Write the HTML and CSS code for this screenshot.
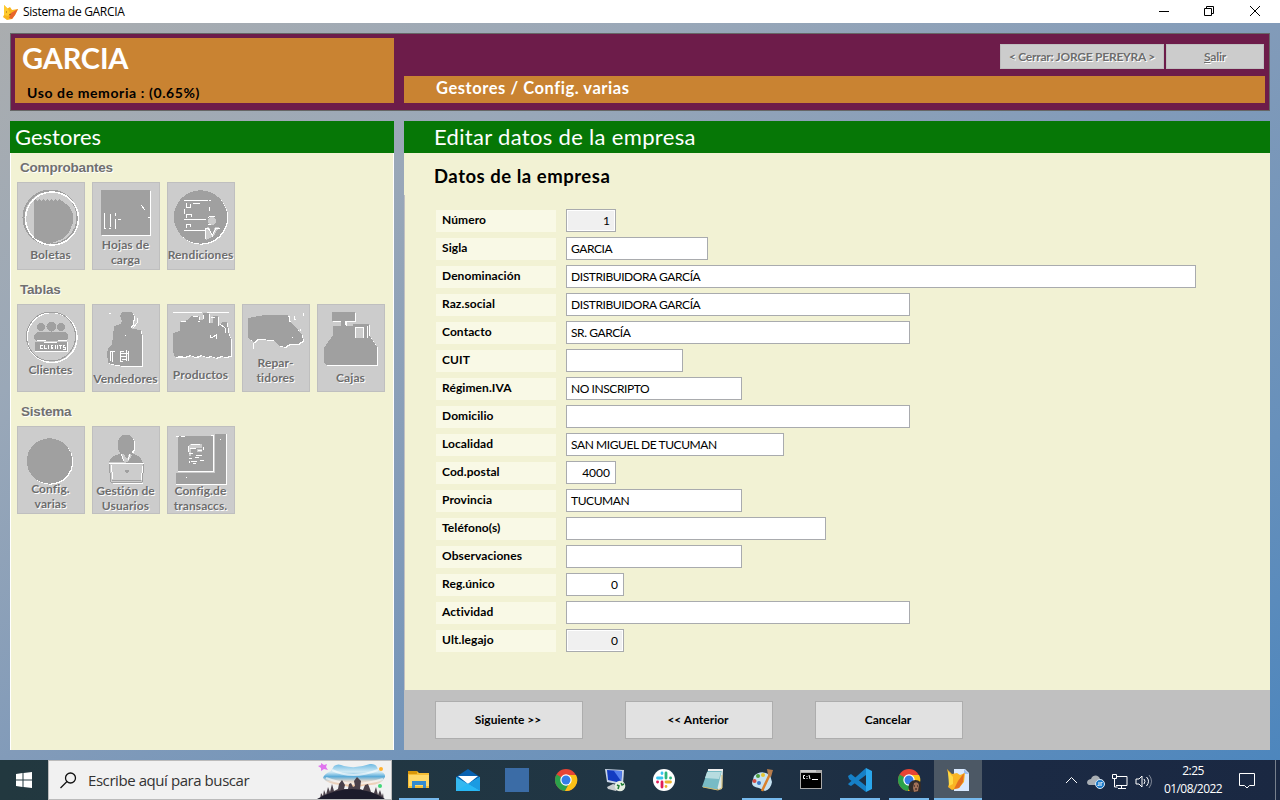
FILE: index.html
```html
<!DOCTYPE html>
<html lang="es">
<head>
<meta charset="utf-8">
<title>Sistema de GARCIA</title>
<link rel="stylesheet" href="styles.css">
</head>
<body>
<div class="screen">
<header class="titlebar">
  <svg class="fox" viewBox="0 0 18 18" width="18" height="18"><path d="M2 2l3.500 3.500L8 4l2 3 6-1-3 6-3 4-5 1-4-3 1.500-3z" fill="#f9b51b"/><path d="M9 10l7-4-3 6-3 4-3-1z" fill="#e8642a"/><path d="M2 2l4 4 2 4-2 3-4-1z" fill="#ffcb2e"/><path d="M4 9h1M7 12l2-1" stroke="#9a5a10"/></svg>
  <span class="win-title">Sistema de GARCIA</span>
  <svg class="win-controls" viewBox="0 0 120 22" width="120" height="22" fill="none" stroke="#000"><path d="M9 10.500h10M54.500 7.500h7v7h-7zM56.500 7.500v-2h7v7h-2"/><path d="M100 5l10 10M110 5l-10 10"/></svg>
</header>
<main class="desktop">
  <section class="banner">
    <div class="brand"><h1>GARCIA</h1><p>Uso de memoria : (0.65%)</p></div>
    <div class="banner-right">
      <div class="session"><button class="b1" disabled>&lt; Cerrar: JORGE PEREYRA &gt;</button><button class="b2" disabled><u>S</u>alir</button></div>
      <div class="crumb"><span>Gestores / Config. varias</span></div>
    </div>
  </section>
  <div class="columns">
    <aside class="side">
      <h2 class="bar">Gestores</h2>
      <div class="group">
        <h3 class="g1">Comprobantes</h3>
        <div class="tiles">
          <div class="tile"><svg class="h65"><circle class="ring" cx="33.500" cy="35.500" r="27"/><circle class="wring" cx="35" cy="36.500" r="26.500"/><path class="g" d="M17 19l1-2 2 2 2-2 2 2 2-2 2 2 2-2 2 2 2-2 2 2 2-2 2 2 2-2 3 2 7 5 4 8v9l-4 9-7 7-10 4h-7l-11-5z"/><path class="ring" d="M19 56l12 5"/></svg><span>Boletas</span></div>
          <div class="tile"><svg class="h55"><path class="w" d="M10 9h49v45H10z"/><path class="g" d="M9 8h49v45H9z"/><path class="wl" d="M12.500 31v15M18.500 32v13M23.500 31v3M23.500 37v10M26 37h2M28 37h1M12 46h2M17 46h2M49 23l4 5M56 36l3-1M58.500 31v6M10 53h7"/></svg><span>Hojas de<br>carga</span></div>
          <div class="tile"><svg class="h65"><circle class="w" cx="34.500" cy="36" r="26.700"/><circle class="g" cx="33.500" cy="35" r="26.700"/><path class="wl" d="M17 18.500h24M42 18.500h2M19.500 21v4h4v-3M26 21.500h7M17 27v5M42 25v4M19.500 36v-4h5v3M17 37.500h22M19.500 46v-4h4v3M17 48.500h21"/><circle cx="45" cy="39" r="4" fill="#ccc"/><path d="M38 46l4-1 3 8 3-8 4 0-5 9-8 4z" fill="#ccc"/><path class="wl" d="M38.500 57V46.500h3l4 7 3-7h4M41 36l2-2h5M41 42l3 1"/></svg><span>Rendiciones</span></div>
        </div>
      </div>
      <div class="group">
        <h3 class="g2">Tablas</h3>
        <div class="tiles">
          <div class="tile"><svg class="h58"><circle class="wring" cx="35" cy="33.500" r="25"/><circle class="ring2" cx="34" cy="32.500" r="24.500"/><g class="g"><circle cx="24" cy="23" r="4"/><circle cx="34.500" cy="22.500" r="5"/><circle cx="44" cy="23" r="4"/><path d="M20 28h28l3 3v4l-3 2H20l-3-2v-3zM18 38h32v9H18z"/></g><path class="wl" d="M20 36.500h9M27 38.500h13M41 36.500h9M18 47.500h33M50.500 38v9"/><path class="wl" d="M25.500 41.500h-2v3h2M27.500 41v3.500h2M31.500 41v4M36 41.500h-2v3h2M34 43h2M38.500 45v-4M40.500 45v-4M42 41.500h3M43.500 41v4M48 41.500h-2v1.500h2v2h-2"/></svg><span>Clientes</span></div>
          <div class="tile"><svg class="h67"><path class="w" transform="translate(1 1)" d="M30 8h10l2 4-1 8-3 3 2 2 9 1 1 7v29H32l-8-1-8-2-1-11 2-5 3-2 2-19 7-2 1-3-2-5z"/><path class="g" d="M30 8h10l2 4-1 8-3 3 2 2 9 1 1 7v29H32l-8-1-8-2-1-11 2-5 3-2 2-19 7-2 1-3-2-5z"/><path class="wl" d="M17 9h2M18.500 57V47h4M20.500 58V48M28 47h4M28.500 47v10M28 52h7M30 55h4M34.500 46v11M36.500 47v10M28 49h9M28 57h3M33 31h1M45 14v5l-4 5"/></svg><span>Vendedores</span></div>
          <div class="tile"><svg class="h63"><path class="wl" d="M6 8.500h29M40 8.500h22"/><path class="w" transform="translate(1 1)" d="M6 29l7-2V18l8-2 3-4h8v4h4V9h6v10h4v-7h5v10l5-4h4l1 10 3 7v17l-6 1-4-1-5 2-5-2-5 1-5-2-6 2-5-2-5 2-5-1-5 1-2-5z"/><path class="g" d="M6 29l7-2V18l8-2 3-4h8v4h4V9h6v10h4v-7h5v10l5-4h4l1 10 3 7v17l-6 1-4-1-5 2-5-2-5 1-5-2-6 2-5-2-5 2-5-1-5 1-2-5z"/><path class="wl" d="M14 17h5M26 12h5M36 11v4M44 13h4M43 31v3l3-1 3-2v4M53 20l5 4v5M31 17h2M12 53h8M27 53h5"/></svg><span>Productos</span></div>
          <div class="tile"><svg class="h51"><path class="w" transform="translate(1 1)" d="M6 14l17-3h23l2 7 8 8 4 5 1 6-5 3-8 0-5 3-5-1-7-6-15-1-4 3-6-4z"/><path class="g" d="M6 14l17-3h23l2 7 8 8 4 5 1 6-5 3-8 0-5 3-5-1-7-6-15-1-4 3-6-4z"/><path class="wl" d="M47 12v6M52 12v3h2M61 9v3M58 25v2M50 33h1M11.500 39v6"/></svg><span>Repar-<br>tidores</span></div>
          <div class="tile"><svg class="h66"><path class="w" transform="translate(1 1)" d="M15 8h23v9h-9v5h7v-2h16v11l8 12v18H9l-2-2V44l9-13v-9h8v-5h-9z"/><path class="g" d="M15 8h23v9h-9v5h7v-2h16v11l8 12v18H9l-2-2V44l9-13v-9h8v-5h-9z"/><path d="M39 23h7v11h-7z" fill="#ccc"/><path class="wl" d="M38.500 34V23.500h8M46.500 23v11M28.500 17v4M50.500 22v12"/></svg><span>Cajas</span></div>
        </div>
      </div>
      <div class="group">
        <h3 class="g3">Sistema</h3>
        <div class="tiles">
          <div class="tile"><svg class="h55"><circle class="w" cx="33.500" cy="36" r="22.700"/><circle class="g" cx="32.500" cy="35" r="22.700"/></svg><span>Config.<br>varias</span></div>
          <div class="tile"><svg class="h57"><ellipse class="w" cx="35" cy="20" rx="8.500" ry="10.500"/><ellipse class="g" cx="34" cy="19" rx="8.500" ry="10.500"/><path class="g" d="M17 36l3-5 9-4h11l8 4 3 6z"/><path d="M29 28h3l3 5 2-5 3 1-4 7h-4z" fill="#ccc"/><path d="M17 38h35l-2 18H20z" fill="#ccc"/><path class="ring2" d="M17 38l2 18h31l2-18M20 54.500h29"/><path class="wl" d="M17 37.500h35M20.500 57.500h30M51 40l-2 14M19 39l2 14M29 28l3 7M38 28l-2 6"/><path class="g" d="M33 44h4v2h-1v1h-2v-1h-1z"/></svg><span>Gestión de<br>Usuarios</span></div>
          <div class="tile"><svg class="h57"><path class="g" d="M11 10h35v35H11zM48 8h11v50H9V47h39z"/><path class="wl" d="M11 45.500h35M46.500 9v37M9 58.500h51M59.500 8v50M9 10h3M14 10h4M44 9h3M53 13h1M19 51h1"/><path d="M23 18h12v4H21zM21 22h3v8h-2zM30 23h5v3h-5z" fill="#ccc"/><path class="wl" d="M24 18.500h9M21.500 20v6M23 22.500h6M31 24.500h4M36.500 21v3M22 27.500h4M29 29.500h6M22 32.500h3M28 31.500h4M24 35.500h6M33 34.500h4M22.500 35v2M26 37.500h3"/></svg><span>Config.de<br>transaccs.</span></div>
        </div>
      </div>
    </aside>
    <section class="content">
      <h2 class="bar">Editar datos de la empresa</h2>
      <form class="form">
        <h3>Datos de la empresa</h3>
        <div class="row"><label>Número</label><div class="field num ro w50">1</div></div>
        <div class="row"><label>Sigla</label><div class="field w142">GARCIA</div></div>
        <div class="row"><label>Denominación</label><div class="field w630">DISTRIBUIDORA GARCÍA</div></div>
        <div class="row"><label>Raz.social</label><div class="field w344">DISTRIBUIDORA GARCÍA</div></div>
        <div class="row"><label>Contacto</label><div class="field w344">SR. GARCÍA</div></div>
        <div class="row"><label>CUIT</label><div class="field w117"></div></div>
        <div class="row"><label>Régimen.IVA</label><div class="field w176">NO INSCRIPTO</div></div>
        <div class="row"><label>Domicilio</label><div class="field w344"></div></div>
        <div class="row"><label>Localidad</label><div class="field w218">SAN MIGUEL DE TUCUMAN</div></div>
        <div class="row"><label>Cod.postal</label><div class="field num w50">4000</div></div>
        <div class="row"><label>Provincia</label><div class="field w176">TUCUMAN</div></div>
        <div class="row"><label>Teléfono(s)</label><div class="field w260"></div></div>
        <div class="row"><label>Observaciones</label><div class="field w176"></div></div>
        <div class="row"><label>Reg.único</label><div class="field num w58">0</div></div>
        <div class="row"><label>Actividad</label><div class="field w344"></div></div>
        <div class="row"><label>Ult.legajo</label><div class="field num ro w58">0</div></div>
      </form>
      <footer class="actions"><button>Siguiente &gt;&gt;</button><button>&lt;&lt; Anterior</button><button>Cancelar</button></footer>
    </section>
  </div>
</main>
<nav class="taskbar">
  <div class="start"><svg width="16" height="16" viewBox="0 0 16 16"><path fill="#fff" d="M0 2l6.500-1v6.500H0zM7.500 1L16 0v7.500H7.500zM0 8.500h6.500V15L0 14zM7.500 8.500H16V16l-8.500-1z"/></svg></div>
  <div class="search">
    <svg width="17" height="17" viewBox="0 0 17 17" fill="none" stroke="#111" stroke-width="1.300"><circle cx="10.500" cy="6" r="5"/><path d="M7 9.500L.5 16"/></svg>
    <span>Escribe aquí para buscar</span>
    <svg class="landscape" width="76" height="38" viewBox="0 0 76 38"><defs><linearGradient id="sky" x2="0" y2="1"><stop offset="0" stop-color="#6cb9e3"/><stop offset=".35" stop-color="#d3ebf5"/><stop offset=".55" stop-color="#5aabd9"/><stop offset=".75" stop-color="#e6d9cd"/><stop offset="1" stop-color="#f5c49c"/></linearGradient></defs><path d="M17 5q4-3 10 0 12 3 26-2 7-1 8 6 8 3 7 7-4 9-18 8-13 4-26 0-14-1-18-7 1-4 8-7z" fill="url(#sky)"/><path d="M15 9q20 10 46 0M9 17q27 11 57 1" fill="none" stroke="#fff" stroke-opacity=".6" stroke-width="2"/><path d="M3 38l1-6 2 3 1-6 2 5 2-8 2 5 2-8 2 7 4-2 1-5 3-4 3 5-1 4h4l1-5 2-1 2 4 2-1-1-5 3-4 4 4-1 8 3 1 2-5 3-1 2 5 1 3 3 1 2-6 2 8 2-5 2 6 1-3 1 8z" fill="#4a4049"/><path d="M0 38q36-20 68 0z" fill="#1c1b2b"/><path d="M4 2l3 2 3-1-1 3 2 3-4-1-3 2V7L1 5l3-1z" fill="#e074ee"/><circle cx="64" cy="8" r="2" fill="#ffb02e"/><circle cx="63" cy="25" r="2" fill="#42d779"/></svg>
  </div>
  <div class="apps">
    <div class="app open"><svg viewBox="0 0 24 24"><path d="M1 3h9l2 2h10v15H1z" fill="#f5bd35"/><path d="M1 3h9v3H1z" fill="#d99709"/><path d="M2 7h20v11H2z" fill="#ffd96a"/><path d="M5 20v-7h14v7h-3v-3H8v3z" fill="#348bd0"/></svg></div>
    <div class="app"><svg viewBox="0 0 24 24"><path d="M0 9L12 1l12 8v14H0z" fill="#0861b0"/><path d="M2 8h20l-10 8z" fill="#fff"/><path d="M0 9l12 7 12-7v14H0z" fill="#35b8ef"/><path d="M12 16l12-7v14z" fill="#1b9be2"/><path d="M0 23l12-7 12 7z" fill="#28b8f5"/></svg></div>
    <div class="app"><svg viewBox="0 0 24 24"><path d="M0 0h24v24H0z" fill="#3b6ca6"/></svg></div>
    <div class="app"><svg viewBox="0 0 24 24"><circle cx="12" cy="12" r="11" fill="#e74435"/><path d="M2.500 6.500A11 11 0 0 0 11 23l5-9-4-2z" fill="#2ba24b"/><path d="M12 7h10a11 11 0 0 1-11 16l5-9z" fill="#fbc116"/><circle cx="12" cy="12" r="5.700" fill="#fff"/><circle cx="12" cy="12" r="4.500" fill="#347de8"/></svg></div>
    <div class="app"><svg viewBox="0 0 24 24"><path d="M2 1l19 1-1 15L4 14z" fill="#c9d5e8"/><path d="M4 2l15 1-1 12L5 12z" fill="#143cc1"/><path d="M11 3l8 0-1 10z" fill="#5580ed"/><path d="M4 19l6-3 7 2-4 5-8-2z" fill="#c8cdd0"/><circle cx="17" cy="18" r="5.300" fill="#e5eee2"/><path d="M14 17l2 1-1 3M18 15l1 2 2-1" stroke="#1b7b31" stroke-width="1.500" fill="none"/></svg></div>
    <div class="app"><svg viewBox="0 0 24 24"><circle cx="12" cy="12" r="11" fill="#fff"/><g fill="none" stroke-linecap="round" stroke-width="2.800"><path d="M10 5v.5M5.500 10H10" stroke="#36c5f0"/><path d="M14 5v5M18.500 10h.1" stroke="#2eb67d"/><path d="M14 14h4.500M14 18.500v.1" stroke="#ecb22e"/><path d="M10 14v5M5.500 14h.1" stroke="#e01e5a"/></g></svg></div>
    <div class="app"><svg viewBox="0 0 24 24"><path d="M7 2h15l-1 19-4 1z" fill="#dce8e7"/><path d="M7 2h14l-5 20L1 19z" fill="#78bbc5"/><path d="M6 4h14l-2 7L4 10z" fill="#b7dce0"/><path d="M2 19l15 3 4-2V7" stroke="#d4b869" fill="none"/><path d="M7 2h15" stroke="#eee" stroke-width="2"/></svg></div>
    <div class="app open"><svg viewBox="0 0 24 24"><path d="M4 8q7-7 16-1l2 7q-1 7-7 9l-6-3q-7-1-7-5z" fill="#c6e2f2"/><circle cx="8" cy="8" r="2" fill="#4c9d3e"/><circle cx="13" cy="7" r="2" fill="#e6c632"/><circle cx="4.500" cy="13" r="2" fill="#d54d43"/><circle cx="9" cy="15" r="2" fill="#3978ca"/><path d="M20 6L12 23" stroke="#da812b" stroke-width="2.500"/><path d="M17 1l6 1-2 7-3-2z" fill="#b67c4c"/></svg></div>
    <div class="app"><svg viewBox="0 0 24 24"><path d="M1 2h22v19H1z" fill="#aaa"/><path d="M2 5h20v15H2z" fill="#000"/><path d="M2 3h15" stroke="#eee"/><path d="M6 7.500H4.500v3H6M8 8v1M8 10v1M10 7l1 4M13 11.500h6" stroke="#fff" fill="none"/></svg></div>
    <div class="app open"><svg viewBox="0 0 24 24"><path d="M0 8l3-2 15 12v6L1 11z" fill="#1680c7"/><path d="M1 17l-1-1L18 0v7L3 18z" fill="#1680c7"/><path d="M18 0l6 3v18l-6 3z" fill="#2aa7ed"/></svg></div>
    <div class="app open"><svg viewBox="0 0 24 24"><circle cx="12" cy="12" r="11" fill="#e74435"/><path d="M2.500 6.500A11 11 0 0 0 11 23l5-9-4-2z" fill="#2ba24b"/><path d="M12 7h10a11 11 0 0 1-11 16l5-9z" fill="#fbc116"/><circle cx="12" cy="12" r="5.700" fill="#fff"/><circle cx="12" cy="12" r="4.500" fill="#347de8"/><circle cx="18.500" cy="19" r="7" fill="#302b2b"/><path d="M17 15q4-2 5 2l-1 6-4 1-1-4z" fill="#a17159"/><path d="M17 18h1M20 18h1M18 21h2" stroke="#201718"/></svg></div>
    <div class="app open active"><svg viewBox="0 0 24 24"><path d="M8 1h11l4 4v18H8z" fill="#d9e9ff"/><path d="M18 1v5h5" fill="#9bbdf0"/><path d="M1 1l5 5 5-1 3 2 5-2-1 9-5 6-7 2-4-3 2-6z" fill="#f9b524"/><path d="M12 13l6-8-1 9-4 6-5 1z" fill="#e46f21"/><path d="M2 3l5 6v7l-4 2z" fill="#ffda45"/></svg></div>
  </div>
  <div class="tray">
    <svg width="92" height="24" viewBox="0 0 92 24" fill="none" stroke="#fff"><path d="M1 15l5.500-5.500L12 15"/><path d="M24 17c-4-2-1-6 2-6 2-5 8-4 9 0 4 0 5 5 2 6z" fill="#a9afb5" stroke="none"/><circle cx="35" cy="16" r="4.500" fill="#1979c9" stroke="#dce8f4"/><path d="M33 15h4v-1M37 17h-4v1"/><path d="M52 8.500h10v9H51M56.500 17v4M53 20.500h8M47.500 6.500h4v4h-4zM49.500 10v9h3"/><path d="M71 11h3l3-3v11l-3-3h-3zM79 11q2 2 0 5M81.500 9q4 4 0 9"/><path d="M84 7q5 6 0 13" opacity=".45"/></svg>
    <div class="clock"><span>2:25</span><span>01/08/2022</span></div>
    <svg class="notice" width="18" height="18" viewBox="0 0 18 18" fill="none" stroke="#fff"><path d="M1.500 1.500h15v12h-5L9 16l-2.500-2.500h-5z"/></svg>
    <i class="peek"></i>
  </div>
</nav>
</div>
</body>
</html>
```
FILE: styles.css
```css
* { box-sizing: border-box; }
body { margin: 0; font-family: Lato, "Open Sans", sans-serif; }
h1, h2, h3, p { margin: 0; font-weight: normal; }
button { font-family: inherit; padding: 0; border-radius: 0; }
.screen { width: 1280px; height: 800px; display: flex; flex-direction: column; overflow: hidden; }
.titlebar { height: 23px; background: #fff; display: flex; align-items: center; padding-left: 2px; }
.win-title { font: 12px/20px "Open Sans", sans-serif; margin-left: 3px; letter-spacing: -0.3px; }
.win-controls { margin-left: auto; margin-right: 10px; }
.desktop { height: 737px; padding: 10px; background: linear-gradient(150deg, #aaadaf 0%, #9aa8b8 25%, #829bb9 50%, #6790bb 78%, #4d86bd 100%); }
.banner { height: 78px; background: #6d1c4a; border: 1px solid #666; display: flex; padding: 4px; gap: 10px; }
.brand { width: 379px; height: 65px; background: #c98332; padding: 2px 7px; }
.brand h1 { color: #fff; font-weight: bold; font-size: 29px; line-height: 36px; letter-spacing: -0.15px; }
.brand p { font-weight: bold; font-size: 14px; line-height: 18px; letter-spacing: 0.6px; margin: 8px 0 0 5px; }
.banner-right { flex: 1; display: flex; flex-direction: column; }
.session { height: 38px; display: flex; justify-content: flex-end; gap: 2px; padding: 6px 1px 0 0; }
.session button { height: 25px; background: #ccc; border: 1px solid #bfbfbf; color: #6d6d6d; text-shadow: 1px 1px #fff; font-size: 12px; font-weight: bold; letter-spacing: -0.25px; }
.b1 { width: 164px; }
.b2 { width: 98px; }
.crumb { height: 27px; background: #c98332; color: #fff; font-weight: bold; font-size: 16.500px; line-height: 25px; letter-spacing: 0.55px; padding-left: 32px; }
.columns { margin-top: 10px; display: flex; gap: 10px; height: 629px; }
.side { width: 384px; background: #f2f2d4; border-right: 1px solid #fff; border-left: 1px solid #fff; }
.bar { height: 32px; background: #067706; color: #fff; font-size: 22px; line-height: 31px; }
.side .bar { margin: 0 -1px; padding-left: 5px; }
.group { height: 122px; padding: 4px 0 0 6px; }
.group h3 { height: 20px; margin: 0 0 5px 3px; font: bold 13.500px/21px "Liberation Sans", sans-serif; letter-spacing: -0.2px; color: #707070; text-shadow: 1px 1px #fff; }
.group .g3 { margin-left: 4px; }
.tiles { display: flex; gap: 7px; }
.tile { width: 68px; height: 88px; background: #ccc; border: 1px solid #bfbfbf; display: flex; flex-direction: column; align-items: center; overflow: hidden; }
.tile svg { width: 68px; flex: none; overflow: visible; margin: -1px -1px 0; shape-rendering: crispEdges; }
.tile span { margin-left: -1px; font-size: 12px; line-height: 15px; font-weight: bold; letter-spacing: 0.1px; color: #6d6d6d; text-shadow: 1px 1px #fff; text-align: center; white-space: nowrap; }
.h51 { height: 51px; } .h55 { height: 55px; } .h57 { height: 57px; } .h58 { height: 58px; }
.h63 { height: 63px; } .h65 { height: 65px; } .h66 { height: 66px; } .h67 { height: 67px; }
.g { fill: #a0a0a0; }
.w { fill: #fff; }
.wl { fill: none; stroke: #fff; }
.ring { fill: none; stroke: #a0a0a0; stroke-width: 2; }
.ring2 { fill: none; stroke: #a0a0a0; }
.wring { fill: none; stroke: #fff; stroke-width: 1.500; }
.content { width: 866px; background: #f2f2d4; display: flex; flex-direction: column; }
.content .bar { padding-left: 30px; letter-spacing: 0.32px; }
.form { height: 537px; padding: 10px 0 0 32px; background: linear-gradient(#c0c0c0, #c0c0c0) 0 42px / 1px 100% no-repeat; }
.form h3 { font-weight: bold; font-size: 18.500px; line-height: 27px; height: 46px; margin-left: -2px; letter-spacing: 0.52px; }
.row { display: flex; gap: 10px; height: 28px; align-items: flex-start; }
.row label { width: 120px; height: 22px; margin-top: 1px; background: #f9f9e6; padding-left: 6px; font-weight: bold; font-size: 12px; line-height: 20px; letter-spacing: 0.08px; }
.field { height: 23px; border: 1px solid #a9abae; background: #fff; font-size: 12px; line-height: 22px; letter-spacing: -0.42px; padding: 0 4px; white-space: nowrap; }
.num { text-align: right; padding-right: 5px; letter-spacing: 0; }
.ro { background: #f0f0f0; box-shadow: inset 0 0 0 1px #fff; }
.w50 { width: 50px; } .w58 { width: 58px; } .w117 { width: 117px; } .w142 { width: 142px; } .w176 { width: 176px; }
.w218 { width: 218px; } .w260 { width: 260px; } .w344 { width: 344px; } .w630 { width: 630px; }
.actions { height: 60px; background: #c0c0c0; padding: 11px 0 0 31px; display: flex; gap: 42px; }
.actions button { width: 148px; height: 38px; border: 1px solid #adadad; background: #e1e1e1; font-size: 12px; font-weight: bold; color: #000; padding: 0 2px 2px 0; }
.taskbar { height: 40px; display: flex; background: linear-gradient(90deg, #22383f, #203544 50%, #1b2a44 80%, #1a2842); }
.start { width: 48px; display: grid; place-items: center; }
.search { width: 344px; background: #f1f1f1; border: 1px solid #bbb; display: flex; align-items: center; padding-left: 11px; }
.search span { margin-left: 11px; font: 15px/20px "Open Sans", sans-serif; color: #333; letter-spacing: -0.43px; white-space: nowrap; }
.landscape { margin-left: auto; margin-right: -2px; }
.apps { display: flex; gap: 1px; margin-left: 3px; }
.app { width: 48px; height: 40px; display: grid; place-items: center; padding-bottom: 1px; }
.app svg { width: 24px; height: 24px; }
.open { background: linear-gradient(#76b9ed, #76b9ed) 50% 100% / 40px 2px no-repeat; }
.active { background-color: #4c5865; background-size: 48px 2px; }
.tray { margin-left: auto; display: flex; align-items: center; }
.tray > svg:first-child { margin-right: 1px; }
.clock { width: 70px; display: flex; flex-direction: column; align-items: center; font: 12px/18px "Open Sans", sans-serif; letter-spacing: -0.55px; white-space: nowrap; color: #fff; }
.notice { margin: 1px 0 0 10px; }
.peek { width: 1px; height: 40px; background: #77808d; margin: 0 4px 0 19px; }
```
